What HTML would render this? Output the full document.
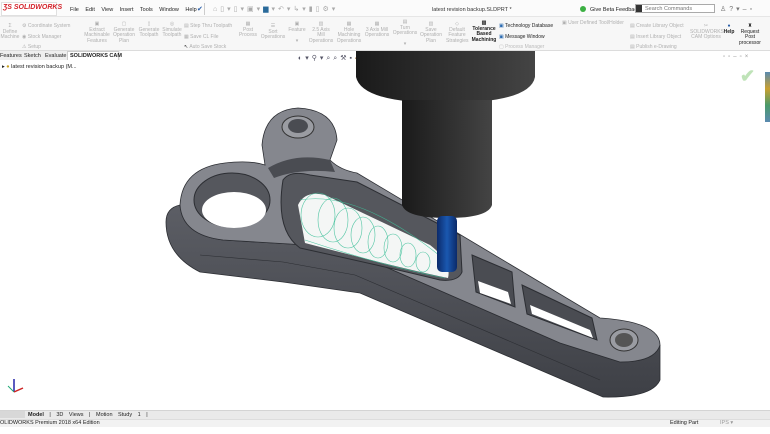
<!DOCTYPE html>
<html><head><meta charset="utf-8"><style>
*{margin:0;padding:0;box-sizing:border-box}
body{width:770px;height:434px;overflow:hidden;background:#fff;font-family:"Liberation Sans",sans-serif;position:relative}
.a{position:absolute;white-space:nowrap}
.g{color:#b0b0b0;font-size:5px;line-height:5.5px;text-align:center}
.m{font-size:5.5px;color:#222}
</style></head><body>
<div class="a" style="left:0;top:0;width:770px;height:17px;background:#fbfbfb;border-bottom:1px solid #e6e6e6"></div>
<div class="a" style="left:1px;top:2px;width:56px;height:14px;border:1px solid #e0e0e0;background:#fff"></div>
<div class="a" style="left:3px;top:4px;font-size:7px;font-weight:bold;color:#d3222a;font-style:italic">ƷS SOLIDWORKS</div>
<div class="a m" style="left:70px;top:7px;word-spacing:5px">File Edit View Insert Tools Window Help</div>
<div class="a" style="left:197px;top:5px;font-size:7px;color:#2a5ea8">✔</div>
<div class="a" style="left:204px;top:3px;width:1px;height:12px;background:#ccc"></div>
<div class="a" style="left:213px;top:5px;font-size:7px;color:#aaa;letter-spacing:3px">⌂▯▾▯▾▣▾<span style="color:#2a6a9a">▆</span>▾↶▾↳▾▮▯⚙▾</div>
<div class="a m" style="left:432px;top:7px;color:#333">latest revision backup.SLDPRT *</div>
<div class="a" style="left:580px;top:6px;width:6px;height:6px;border-radius:3px;background:#3cb043"></div>
<div class="a m" style="left:590px;top:7px">Give Beta Feedback</div>
<div class="a" style="left:635px;top:4px;width:80px;height:9px;border:1px solid #aaa;background:#fff"></div>
<div class="a" style="left:636px;top:5px;width:6px;height:7px;background:#333"></div>
<div class="a m" style="left:645px;top:6px;color:#777">Search Commands</div>
<div class="a m" style="left:720px;top:5px;color:#777;font-size:7px;letter-spacing:3px">♙?▾‒▫</div>
<div class="a" style="left:0;top:17px;width:770px;height:34px;background:#f7f7f7;border-bottom:1px solid #dcdcdc"></div>
<div class="a g" style="left:0;top:24px;width:20px">Σ<br>Define<br>Machine</div>
<div class="a g" style="left:22px;top:21px;text-align:left;line-height:10.5px">⚙ Coordinate System<br>◉ Stock Manager<br>⚠ Setup</div>
<div class="a g" style="left:83px;top:22px;width:28px">▣<br>Extract<br>Machinable<br>Features</div>
<div class="a g" style="left:111px;top:22px;width:26px">▢<br>Generate<br>Operation<br>Plan</div>
<div class="a g" style="left:137px;top:22px;width:24px">▯<br>Generate<br>Toolpath</div>
<div class="a g" style="left:160px;top:22px;width:24px">◎<br>Simulate<br>Toolpath</div>
<div class="a g" style="left:184px;top:21px;text-align:left;line-height:10.5px">▤ Step Thru Toolpath<br>▦ Save CL File<br><span style="color:#222">↖</span> Auto Save Stock</div>
<div class="a g" style="left:237px;top:22px;width:22px">▦<br>Post<br>Process</div>
<div class="a g" style="left:260px;top:24px;width:26px">☰<br>Sort<br>Operations</div>
<div class="a g" style="left:288px;top:22px;width:18px">▣<br>Feature<br><br>▾</div>
<div class="a g" style="left:308px;top:22px;width:26px">▥<br>2.5 Axis<br>Mill<br>Operations</div>
<div class="a g" style="left:336px;top:22px;width:26px">▦<br>Hole<br>Machining<br>Operations</div>
<div class="a g" style="left:364px;top:22px;width:26px">▦<br>3 Axis Mill<br>Operations</div>
<div class="a g" style="left:392px;top:20px;width:26px">▤<br>Turn<br>Operations<br><br>▾</div>
<div class="a g" style="left:418px;top:22px;width:26px">▥<br>Save<br>Operation<br>Plan</div>
<div class="a g" style="left:446px;top:22px;width:22px">◇<br>Default<br>Feature<br>Strategies</div>
<div class="a g" style="left:470px;top:21px;width:28px;color:#222;font-weight:bold">▥<br>Tolerance<br>Based<br>Machining</div>
<div class="a g" style="left:499px;top:21px;text-align:left;line-height:10.5px;color:#222"><span style="color:#2a6ab0">▣</span> Technology Database<br><span style="color:#2a6ab0">▣</span> Message Window<br><span style="color:#bbb">▢ Process Manager</span></div>
<div class="a g" style="left:562px;top:21px;text-align:left">▣ User Defined Tool/Holder</div>
<div class="a g" style="left:630px;top:21px;text-align:left;line-height:10.5px">▤ Create Library Object<br>▤ Insert Library Object<br>▤ Publish e-Drawing</div>
<div class="a g" style="left:690px;top:24px;width:32px">✂<br>SOLIDWORKS<br>CAM Options</div>
<div class="a g" style="left:722px;top:24px;width:14px;color:#222;font-weight:bold"><span style="color:#2a5ea8">●</span><br>Help</div>
<div class="a g" style="left:737px;top:24px;width:26px;color:#222">♜<br>Request<br>Post<br>processor</div>
<div class="a" style="left:0;top:51px;width:120px;height:9px;background:#eee"></div>
<div class="a m" style="left:0;top:53px">Features</div>
<div class="a m" style="left:24px;top:53px">Sketch</div>
<div class="a m" style="left:45px;top:53px">Evaluate</div>
<div class="a" style="left:67px;top:51px;width:52px;height:9px;border:1px solid #ccc;border-bottom:none;background:#fff"></div>
<div class="a m" style="left:70px;top:53px;font-weight:bold">SOLIDWORKS CAM</div>
<div class="a m" style="left:2px;top:64px">▸ <span style="color:#c8a020">●</span> latest revision backup (M...</div>
<div class="a" style="left:298px;top:54px;font-size:7px;color:#556;letter-spacing:3px">◐▾⚲▾⌕⌕⚒▪<span style="color:#a07030">◆</span><span style="color:#3070b0">▣</span>▾<span style="color:#3070b0">▣</span>▾◉▾◌◌▾▣▾</div>
<div class="a" style="left:723px;top:54px;font-size:6px;color:#999;letter-spacing:3px">▫▫‒▫×</div>
<div class="a" style="left:740px;top:66px;font-size:18px;color:#bfe3b8;font-weight:bold">✔</div>
<div class="a" style="left:765px;top:72px;width:5px;height:50px;background:linear-gradient(#5a8ab0,#c9a030,#4a9a6a,#5a8ab0)"></div>
<svg class="a" style="left:0;top:0" width="770" height="434">
<defs>
<linearGradient id="cyl" x1="0" x2="1"><stop offset="0" stop-color="#1a1a1a"/><stop offset=".6" stop-color="#333"/><stop offset="1" stop-color="#444"/></linearGradient>
<linearGradient id="blu" x1="0" x2="1"><stop offset="0" stop-color="#0b2a6a"/><stop offset=".5" stop-color="#1a58b0"/><stop offset="1" stop-color="#0b2a6a"/></linearGradient>
<linearGradient id="side" x1="0" y1="0" x2="0" y2="1"><stop offset="0" stop-color="#5c5e65"/><stop offset="1" stop-color="#3e4046"/></linearGradient>
</defs>
<!-- side faces -->
<path d="M180,205 Q166,208 166,222 Q166,255 200,272 L283,282 L360,293 L603,397 Q652,398 660,380 L660,345 Q655,362 620,362 L560,343 L340,247 L223,240 Q182,235 180,205 Z" fill="url(#side)" stroke="#2c2e33" stroke-width=".8"/>
<path d="M200,255 L283,262 L355,275 L600,380" stroke="#2c2e33" stroke-width=".6" fill="none"/>
<!-- top surface -->
<path d="M180,205 Q182,168 225,163 Q250,160 265,165 L262,145 Q265,110 298,108 Q335,110 337,140 L330,160 Q340,170 357,173 L600,318 Q660,322 660,345 Q655,362 620,362 L560,343 L340,247 L223,240 Q182,235 180,205 Z" fill="#85878e" stroke="#2c2e33" stroke-width=".8"/>
<!-- boss -->
<ellipse cx="298" cy="127" rx="16" ry="11" fill="#9a9ca2" stroke="#333"/>
<ellipse cx="298" cy="126" rx="10" ry="7" fill="#4a4c52"/>
<!-- upper pocket -->
<path d="M268,168 Q295,152 330,160 L335,172 Q300,168 274,178 Z" fill="#4a4c52"/>
<!-- big hole -->
<ellipse cx="232" cy="200" rx="38" ry="27" fill="#55575d" stroke="#2c2e33"/>
<ellipse cx="234" cy="210" rx="32" ry="18" fill="#fff"/>
<!-- main pocket -->
<path d="M283,180 Q290,170 310,175 L357,182 L460,235 L462,272 Q458,282 440,280 Q400,270 300,248 Q275,230 283,180 Z" fill="#55575d" stroke="#2c2e33"/>
<path d="M298,205 Q305,190 325,195 L430,245 Q452,262 448,278 Q400,268 305,243 Z" fill="#f4f6f5"/>
<g fill="none" stroke="#3fc09a" stroke-width=".6" opacity=".9">
<ellipse cx="318" cy="215" rx="17" ry="22"/><ellipse cx="333" cy="220" rx="15" ry="22"/><ellipse cx="348" cy="228" rx="14" ry="20"/>
<ellipse cx="363" cy="235" rx="12" ry="18"/><ellipse cx="378" cy="242" rx="10" ry="16"/><ellipse cx="393" cy="248" rx="9" ry="14"/>
<ellipse cx="408" cy="255" rx="8" ry="12"/><ellipse cx="423" cy="262" rx="7" ry="10"/><path d="M300,200 Q360,190 445,260"/><path d="M305,240 Q380,265 445,278"/>
</g>
<!-- slots -->
<path d="M472,255 L512,272 L515,307 L476,292 Z" fill="#4a4c52" stroke="#2c2e33"/>
<path d="M478,281 L508,292 L511,304 L480,293 Z" fill="#fff"/>
<path d="M522,285 L592,318 L597,340 L527,314 Z" fill="#4a4c52" stroke="#2c2e33"/>
<path d="M530,305 L590,330 L593,338 L532,314 Z" fill="#fff"/>
<!-- end hole -->
<ellipse cx="624" cy="340" rx="14" ry="11" fill="#9a9ca2" stroke="#333"/>
<ellipse cx="624" cy="340" rx="9" ry="7" fill="#555"/>
<!-- tool -->
<path d="M356,51 L535,51 L535,77 Q530,103 445,103 Q362,103 356,77 Z" fill="url(#cyl)"/>
<path d="M402,100 L492,100 L492,205 Q488,218 447,218 Q406,218 402,205 Z" fill="url(#cyl)"/>
<rect x="437" y="216" width="20" height="56" rx="5" fill="url(#blu)"/>
<path d="M14,392 L14,379" stroke="#22a" stroke-width="1.5"/>
<path d="M14,392 L8,386" stroke="#2a7" stroke-width="1"/>
<path d="M14,392 L23,388" stroke="#c22" stroke-width="1.5"/>
</svg>
<div class="a" style="left:0;top:410px;width:770px;height:9px;background:#eaeaea;border-top:1px solid #d4d4d4"></div>
<div class="a" style="left:0;top:411px;width:25px;height:7px;background:#d8d8d8"></div>
<div class="a m" style="left:28px;top:412px;word-spacing:4px"><b>Model</b> | 3D Views | Motion Study 1 |</div>
<div class="a" style="left:0;top:419px;width:770px;height:8px;background:#f2f2f2;border-top:1px solid #ddd"></div>
<div class="a m" style="left:0;top:420px">OLIDWORKS Premium 2018 x64 Edition</div>
<div class="a m" style="left:670px;top:420px">Editing Part</div>
<div class="a m" style="left:720px;top:420px;color:#999">IPS ▾</div>
</body></html>
